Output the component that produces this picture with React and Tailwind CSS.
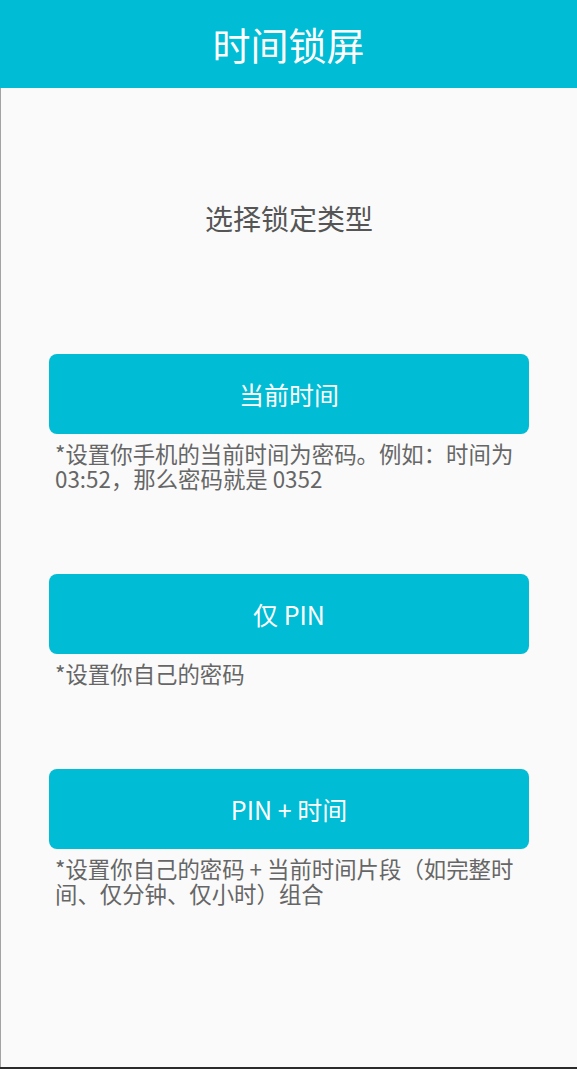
import React from 'react';

// Lock type options shown on the screen
const lockTypes = [
  { label: '当前时间', desc: '*设置你手机的当前时间为密码。例如：时间为 03:52，那么密码就是 0352' },
  { label: '仅 PIN', desc: '*设置你自己的密码' },
  { label: 'PIN + 时间', desc: '*设置你自己的密码 + 当前时间片段（如完整时间、仅分钟、仅小时）组合' },
];

const App = () => {
  return (
    <div
      className="min-h-screen flex flex-col bg-[#fafafa]"
      style={{ fontFamily: '"Noto Sans CJK SC", "Noto Sans", sans-serif' }}
    >
      {/* Header */}
      <div className="h-[88px] bg-[#00bcd4] flex items-center justify-center">
        <h1 className="text-white text-[38px] leading-none">时间锁屏</h1>
      </div>

      {/* Content */}
      <div className="flex-1 flex flex-col border-l border-[#a3a3a3]">
        <h2 className="mt-[111px] text-center text-[28px] leading-[38px] text-[#555555]">选择锁定类型</h2>

        <div className="mt-[117px] flex flex-col gap-[83px]">
          {lockTypes.map((item, index) => (
            <div key={index} className="flex flex-col">
              <button className="mx-[48px] h-[80px] rounded-[8px] bg-[#00bcd4] text-white text-[25px] leading-none flex items-center justify-center">
                {item.label}
              </button>
              <p className="mt-[7px] ml-[54px] mr-[46px] text-[22.4px] leading-[25px] text-[#666666]">
                {item.desc}
              </p>
            </div>
          ))}
        </div>
      </div>

      <div className="h-[2px] bg-[#2b2b2b]" />
    </div>
  );
};

export default App;
